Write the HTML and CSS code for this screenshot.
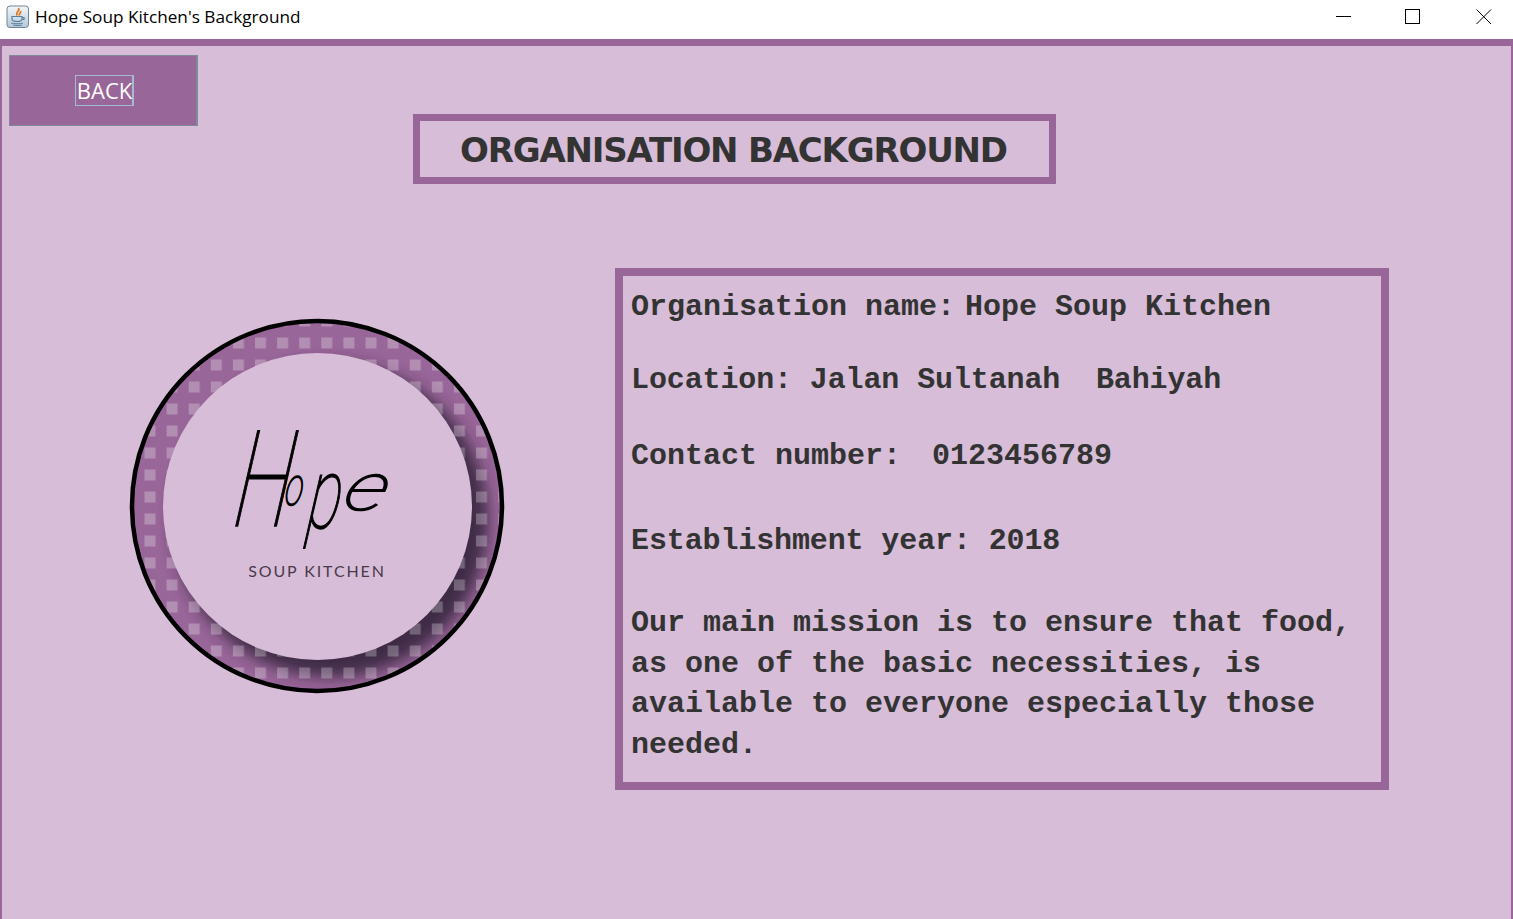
FILE: index.html
```html
<!DOCTYPE html>
<html lang="en">

<head>
    <meta charset="UTF-8">
    <title>Hope Soup Kitchen's Background</title>
    <link rel="stylesheet" href="styles.css">
</head>

<body>
    <div class="titlebar">
        <svg class="appicon" width="24" height="24" viewBox="0 0 24 24">
            <defs>
                <linearGradient id="iconbg" x1="0" y1="0" x2="0" y2="1">
                    <stop offset="0" stop-color="#f4f7fa" />
                    <stop offset="1" stop-color="#b4c8da" />
                </linearGradient>
            </defs>
            <rect x="1" y="1" width="21.5" height="21.5" rx="3" fill="url(#iconbg)" stroke="#6f8597" />
            <path d="M12.500 3c2 3-3.500 3.500-1.500 7.500M14.500 6c1 2-2 2.500-1 4.500" fill="none" stroke="#e2761b" stroke-width="1.800" />
            <path d="M6 11.500h10v2.500c0 2-2 2.500-5 2.500S6 16 6 14zM16 12.500h2v2h-2" fill="none" stroke="#5a7f9c" stroke-width="1.200" />
            <path d="M5 18c3 1 9 1 12 0M7 20c3 .6 7 .6 9 0" fill="none" stroke="#5a7f9c" stroke-width="1" />
        </svg>
        <span class="apptitle">Hope Soup Kitchen's Background</span>
        <div class="wincontrols">
            <svg width="16" height="16" viewBox="0 0 16 16"><path d="M0 7.500h15" stroke="#000" fill="none" /></svg>
            <svg width="16" height="16" viewBox="0 0 16 16"><rect x=".5" y=".5" width="14" height="14" stroke="#000" fill="none" /></svg>
            <svg class="closeicon" width="16" height="16" viewBox="0 0 16 16"><path d="M.5 .5l14.500 14.500M15 .5L.5 15" stroke="#000" fill="none" /></svg>
        </div>
    </div>

    <div class="frame">
        <button class="backbtn"><span class="backlabel">BACK</span></button>
        <div class="heading">ORGANISATION BACKGROUND</div>

        <div class="mainrow">
            <svg class="logo" width="376" height="376" viewBox="0 0 376 376">
                <defs>
                    <pattern id="dots" x="15.500" y="19.500" width="22.100" height="22" patternUnits="userSpaceOnUse">
                        <rect x="0" y="0" width="11" height="11" fill="#fff" fill-opacity=".26" />
                    </pattern>
                    <clipPath id="ringclip">
                        <circle cx="188" cy="188" r="186" />
                    </clipPath>
                    <filter id="soft" x="-20%" y="-20%" width="140%" height="140%">
                        <feGaussianBlur stdDeviation="8" />
                    </filter>
                </defs>
                <circle cx="188" cy="188" r="185" fill="#996699" />
                <g clip-path="url(#ringclip)">
                    <circle cx="202" cy="202" r="157" fill="#3a2640" fill-opacity=".95" filter="url(#soft)" />
                </g>
                <rect x="0" y="0" width="376" height="376" fill="url(#dots)" clip-path="url(#ringclip)" />
                <circle cx="188" cy="188" r="185" fill="none" stroke="#000" stroke-width="4.500" />
                <ellipse cx="188.500" cy="188.500" rx="154.500" ry="153.500" fill="#d7bdd7" />
                <text class="script" transform="translate(103,208) skewX(-7) scale(.62,1)"><tspan class="script-h">H</tspan><tspan class="script-o" dx="-12" dy="-21">o</tspan><tspan class="script-p" dx="12" dy="23">p</tspan></text>
                <text class="script script-e" transform="translate(212,192) skewX(-15) scale(1.3,1)">e</text>
                <text class="logosub" x="188" y="259" text-anchor="middle">SOUP KITCHEN</text>
            </svg>

            <div class="infobox">
                <div class="row row-name"><span>Organisation name:</span><span class="val-name">Hope Soup Kitchen</span></div>
                <div class="row row-loc">Location: Jalan Sultanah&nbsp;&nbsp;Bahiyah</div>
                <div class="row row-contact"><span>Contact number:</span><span class="val-contact">0123456789</span></div>
                <div class="row row-year">Establishment year: 2018</div>
                <div class="row row-mission">Our main mission is to ensure that food,<br>as one of the basic necessities, is<br>available to everyone especially those<br>needed.</div>
            </div>
        </div>
    </div>
</body>

</html>
```

FILE: styles.css
```css
html,
body {
    margin: 0;
    height: 919px;
    overflow: hidden;
    background-color: #fff;
}

.titlebar {
    height: 39px;
    display: flex;
    align-items: center;
    font-family: "Open Sans", "Noto Sans", sans-serif;
    font-size: 17.2px;
    color: #000;
}

.appicon {
    margin: -5px 0 0 6px;
}

.apptitle {
    margin: -6px 0 0 5px;
}

.wincontrols {
    margin: -5px 21px 0 auto;
    display: flex;
    gap: 53px;
}

.closeicon {
    margin-left: 2px;
}

.frame {
    height: 873px;
    border: solid #996699;
    border-width: 7px 2px 0 2px;
    background-color: #d7bdd7;
}

.backbtn {
    display: flex;
    align-items: center;
    justify-content: center;
    width: 189px;
    height: 71px;
    margin: 9px 0 0 7px;
    padding: 0;
    background-color: #996699;
    border: 1px solid #7c8a99;
    border-right-width: 2px;
    font-family: "Open Sans", "Noto Sans", sans-serif;
    font-size: 22px;
    color: #fff;
}

.backlabel {
    display: block;
    height: 29px;
    padding: 0 0 0 1px;
    margin-left: 3px;
    line-height: 29px;
    border: 1px solid #a3bad3;
    border-right-width: 2px;
}

.heading {
    box-sizing: border-box;
    width: 643px;
    height: 70px;
    margin: -12px 0 0 411px;
    padding-left: 40px;
    border: 7px solid #996699;
    font-family: "DejaVu Sans", sans-serif;
    font-weight: bold;
    font-size: 34px;
    letter-spacing: -1.2px;
    line-height: 58px;
    color: #333;
    white-space: nowrap;
}

.mainrow {
    display: flex;
    align-items: flex-start;
    margin: 84px 0 0 127px;
}

.logo {
    display: block;
    margin-top: 50px;
}

.script {
    font-family: "Roboto", sans-serif;
    font-style: italic;
    font-weight: 100;
    fill: #000;
    stroke: #000;
    stroke-width: 1.4px;
}

.script-h {
    font-size: 134px;
}

.script-o {
    font-size: 54px;
}

.script-p {
    font-size: 100px;
}

.script-e {
    font-size: 66px;
}

.logosub {
    font-family: "Lato", sans-serif;
    font-size: 16px;
    letter-spacing: 1.9px;
    fill: #4a3a4a;
}

.infobox {
    box-sizing: border-box;
    width: 774px;
    height: 522px;
    margin-left: 110px;
    padding: 11px 0 0 8px;
    border: 8px solid #996699;
    font-family: "Liberation Mono", monospace;
    font-weight: bold;
    font-size: 30px;
    line-height: 40.5px;
    color: #333;
    white-space: nowrap;
}

.val-name {
    margin-left: 10px;
}

.val-contact {
    margin-left: 31px;
}

.row-loc {
    margin-top: 32px;
    letter-spacing: -.12px;
}

.row-contact {
    margin-top: 36px;
}

.row-year {
    margin-top: 44px;
    letter-spacing: -.12px;
}

.row-mission {
    margin-top: 42px;
}
```
